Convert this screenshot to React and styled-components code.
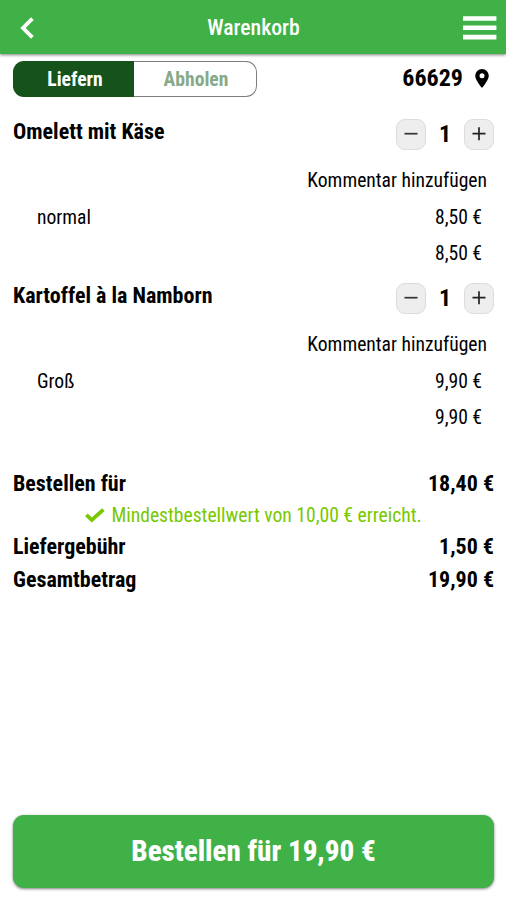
import React, { useState } from 'react';
import styled, { createGlobalStyle } from 'styled-components';

const articulos = [
  { id: 1, nombre: 'Omelett mit Käse', variante: 'normal', precio: 8.5 },
  { id: 2, nombre: 'Kartoffel à la Namborn', variante: 'Groß', precio: 9.9 }
];

const gastosEnvio = 1.5;

const formatear = (valor) => `${valor.toFixed(2).replace('.', ',')} €`;

export default function App() {
  const [modo, setModo] = useState('liefern');
  const [cantidades, setCantidades] = useState({ 1: 1, 2: 1 });

  const cambiarCantidad = (id, delta) => {
    setCantidades({ ...cantidades, [id]: Math.max(1, cantidades[id] + delta) });
  };

  const subtotal = articulos.reduce((acc, curr) => acc + curr.precio * cantidades[curr.id], 0);
  const total = subtotal + gastosEnvio;

  return (
    <>
      <GlobalStyle />
      <Pantalla>
        <Cabecera>
          <BotonIcono aria-label="Zurück">
            <svg width="14" height="22" viewBox="0 0 14 22" fill="none" stroke="#fff" strokeWidth="3.8">
              <path d="M12.4 1.6L3 11l9.4 9.4" />
            </svg>
          </BotonIcono>
          <Titulo>Warenkorb</Titulo>
          <BotonIcono $derecha aria-label="Menü">
            <svg width="34" height="24" viewBox="0 0 34 24" fill="#fff">
              <path d="M0 0.2h33.4v4.6H0zM0 9.5h33.4v4.6H0zM0 18.8h33.4v4.6H0z" />
            </svg>
          </BotonIcono>
        </Cabecera>

        <Contenido>
          <BarraEntrega>
            <Selector>
              <Opcion $activa={modo === 'liefern'} onClick={() => setModo('liefern')}>Liefern</Opcion>
              <Opcion $activa={modo === 'abholen'} onClick={() => setModo('abholen')}>Abholen</Opcion>
            </Selector>
            <CodigoPostal>
              66629
              <svg width="14" height="19" viewBox="0 0 14 19">
                <path
                  fill="#000"
                  fillRule="evenodd"
                  d="M7 0a6.8 6.8 0 0 0-6.8 6.8C0.2 11.200 7 19 7 19s6.800-7.800 6.800-12.200A6.800 6.800 0 0 0 7 0zm0 4.300a2.500 2.500 0 1 1 0 5 2.500 2.500 0 0 1 0-5z"
                />
              </svg>
            </CodigoPostal>
          </BarraEntrega>

          {articulos.map((articulo) => (
            <Articulo key={articulo.id}>
              <FilaNombre>
                <Nombre>{articulo.nombre}</Nombre>
                <Contador>
                  <BotonCantidad aria-label="Weniger" onClick={() => cambiarCantidad(articulo.id, -1)}>
                    <svg width="14" height="14" viewBox="0 0 14 14" stroke="#333" strokeWidth="1.7">
                      <path d="M0.5 6.7h13" />
                    </svg>
                  </BotonCantidad>
                  <Cantidad>{cantidades[articulo.id]}</Cantidad>
                  <BotonCantidad aria-label="Mehr" onClick={() => cambiarCantidad(articulo.id, 1)}>
                    <svg width="14" height="14" viewBox="0 0 14 14" stroke="#222" strokeWidth="1.7">
                      <path d="M0.5 6.7h13M7 0.2v13" />
                    </svg>
                  </BotonCantidad>
                </Contador>
              </FilaNombre>
              <Comentario>Kommentar hinzufügen</Comentario>
              <FilaDetalle>
                <span>{articulo.variante}</span>
                <span>{formatear(articulo.precio)}</span>
              </FilaDetalle>
              <FilaDetalle>
                <span />
                <span>{formatear(articulo.precio * cantidades[articulo.id])}</span>
              </FilaDetalle>
            </Articulo>
          ))}

          <Resumen>
            <FilaTotal>
              <span>Bestellen für</span>
              <span>{formatear(subtotal)}</span>
            </FilaTotal>
            <Aviso>
              <svg width="20" height="15" viewBox="0 0 20 15" fill="none" stroke="#78c800" strokeWidth="3.8">
                <path d="M1.4 6.8l5.4 5.2L18.4 1.6" />
              </svg>
              Mindestbestellwert von 10,00 € erreicht.
            </Aviso>
            <FilaTotal>
              <span>Liefergebühr</span>
              <span>{formatear(gastosEnvio)}</span>
            </FilaTotal>
            <FilaTotal>
              <span>Gesamtbetrag</span>
              <span>{formatear(total)}</span>
            </FilaTotal>
          </Resumen>
        </Contenido>

        <BotonPedir>Bestellen für {formatear(total)}</BotonPedir>
      </Pantalla>
    </>
  );
}

const GlobalStyle = createGlobalStyle`
  * {
    box-sizing: border-box;
  }

  body {
    margin: 0;
    background-color: #fff;
  }

  body, button {
    font-family: 'Roboto Condensed', Roboto, sans-serif;
    font-stretch: condensed;
  }
`;

const Pantalla = styled.div`
  display: flex;
  flex-direction: column;
  height: 900px;
  color: #000;
`;

const Cabecera = styled.header`
  display: grid;
  grid-template-columns: 1fr auto 1fr;
  align-items: center;
  height: 54px;
  padding: 0 9px 0 10px;
  background-color: #40b146;
  box-shadow: 0 1px 3px rgba(0, 0, 0, 0.5);
`;

const BotonIcono = styled.button`
  display: flex;
  align-items: center;
  justify-self: ${(props) => (props.$derecha ? 'end' : 'start')};
  padding: ${(props) => (props.$derecha ? '2px 0 0' : '1px 0 0 10px')};
  border: none;
  background: none;
  cursor: pointer;
`;

const Titulo = styled.h1`
  margin: 0;
  font-size: 21.7px;
  font-weight: 500;
  color: #fff;
`;

const Contenido = styled.main`
  flex: 1;
  padding: 7px 12px 0 13px;
`;

const BarraEntrega = styled.div`
  display: flex;
  align-items: center;
  justify-content: space-between;
  height: 36px;
  margin-bottom: 15px;
`;

const Selector = styled.div`
  display: flex;
  width: 244px;
  height: 36px;
`;

const Opcion = styled.button`
  width: 121px;
  padding: 1px 0 0 2px;
  border: 1px solid ${(props) => (props.$activa ? '#15531a' : '#7c7f7c')};
  background-color: ${(props) => (props.$activa ? '#15531a' : '#fff')};
  color: ${(props) => (props.$activa ? '#fff' : '#86aa88')};
  font-size: 19.6px;
  font-weight: 700;
  cursor: pointer;

  &:first-child {
    border-right: none;
    border-radius: 11px 0 0 11px;
  }

  &:last-child {
    width: 123px;
    border-left: none;
    border-radius: 0 11px 11px 0;
  }
`;

const CodigoPostal = styled.div`
  display: flex;
  align-items: center;
  gap: 12px;
  padding: 0 5px 2px 0;
  font-size: 24px;
  font-weight: 700;
`;

const Articulo = styled.section`
  height: 164px;
`;

const FilaNombre = styled.div`
  display: flex;
  justify-content: space-between;
  height: 50px;
`;

const Nombre = styled.h2`
  margin: 0;
  padding-top: 7px;
  font-size: 22px;
  line-height: 26px;
  font-weight: 700;
`;

const Contador = styled.div`
  display: flex;
  align-items: center;
  height: 44px;
`;

const BotonCantidad = styled.button`
  display: flex;
  align-items: center;
  justify-content: center;
  width: 30px;
  height: 31px;
  padding: 0;
  border: 1px solid #dcdcdc;
  border-radius: 9px;
  background-color: #eee;
  cursor: pointer;
`;

const Cantidad = styled.span`
  width: 38px;
  text-align: center;
  font-size: 24px;
  font-weight: 700;
`;

const Comentario = styled.div`
  height: 36px;
  padding: 1px 7px 0 0;
  text-align: right;
  font-size: 19.6px;
  line-height: 36px;
`;

const FilaDetalle = styled.div`
  display: flex;
  justify-content: space-between;
  height: 36px;
  padding: 2px 12px 0 24px;
  font-size: 19.6px;
  line-height: 36px;
`;

const Resumen = styled.section`
  padding-top: 27px;
`;

const FilaTotal = styled.div`
  display: flex;
  justify-content: space-between;
  font-size: 22px;
  line-height: 33px;
  font-weight: 700;
`;

const Aviso = styled.div`
  display: flex;
  align-items: center;
  justify-content: center;
  gap: 6px;
  height: 30px;
  padding-top: 1px;
  color: #78c800;
  font-size: 19.6px;
`;

const BotonPedir = styled.button`
  height: 73px;
  margin: 0 12px 12px 13px;
  padding-bottom: 2px;
  border: none;
  border-radius: 11px;
  background-color: #40b146;
  box-shadow: 0 1px 3px rgba(0, 0, 0, 0.5);
  color: #fff;
  font-size: 29px;
  font-weight: 800;
  cursor: pointer;
`;
